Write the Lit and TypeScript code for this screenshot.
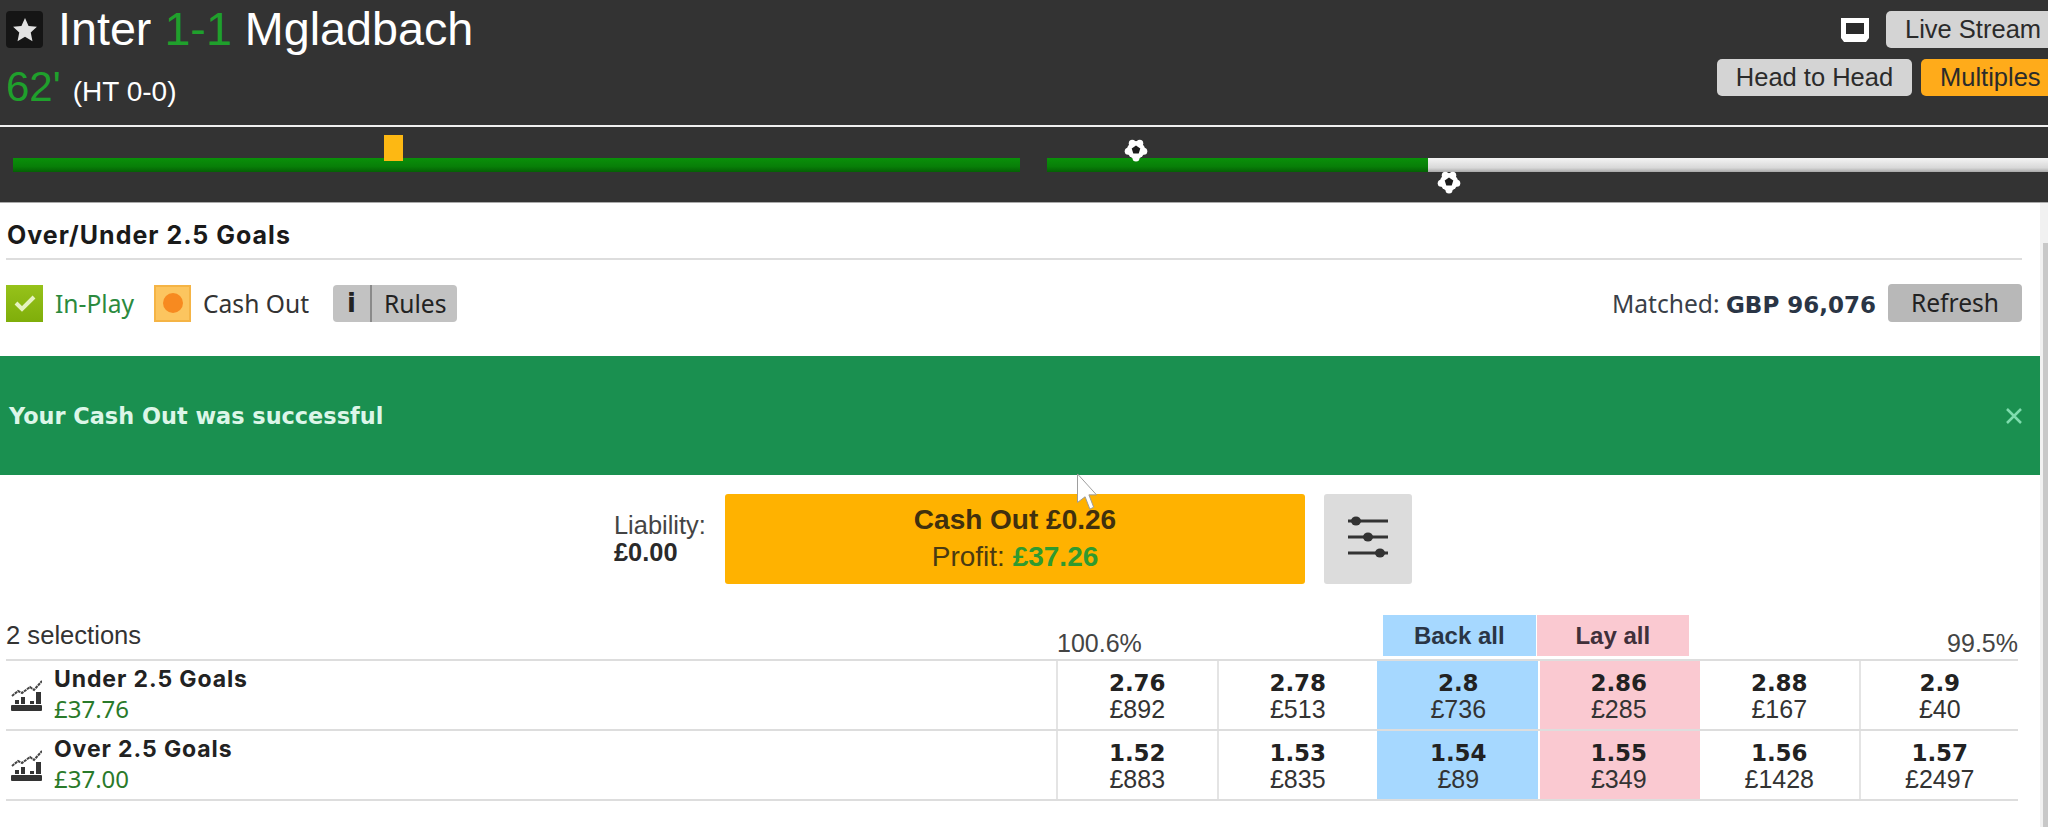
import { LitElement, html, css } from "lit";
import { customElement } from "lit/decorators.js";

const ball = html`<svg class="ball" viewBox="0 0 24 24"><g fill="#fff"><circle cx="12" cy="12" r="9"/><circle cx="8.250" cy="5.200" r="3.500"/><circle cx="15.750" cy="5.200" r="3.500"/><circle cx="19.800" cy="13.300" r="3.500"/><circle cx="12" cy="20" r="3.500"/><circle cx="4.200" cy="13.300" r="3.500"/></g><path d="M12 7.500l4.300 3.100-1.600 5H9.300l-1.600-5z" fill="#1c1c1c"/></svg>`;
const chart = html`<svg class="chart" viewBox="0 0 32 32"><path d="M2 17l6-5 4 2 8-6 4 3 8-9" fill="none" stroke="#444" stroke-width="2" stroke-dasharray="3 .7"/><path d="M5 21h4v4H5zM11 18h4v7h-4zM20 22h4v3h-4zM26 13h5v12h-5z" fill="#333"/><rect x="1" y="26" width="31" height="6" rx="1" fill="#333"/></svg>`;

const rows = [
  { name: "Under 2.5 Goals", pl: "£37.76", cells: [["2.76","£892"],["2.78","£513"],["2.8","£736"],["2.86","£285"],["2.88","£167"],["2.9","£40"]] },
  { name: "Over 2.5 Goals", pl: "£37.00", cells: [["1.52","£883"],["1.53","£835"],["1.54","£89"],["1.55","£349"],["1.56","£1428"],["1.57","£2497"]] },
];

@customElement("app-root")
export class AppRoot extends LitElement {
  static styles = css`
    :host { display: block; width: 2048px; height: 827px; overflow: hidden; background: #fff; color: #333; font-family: "Liberation Sans", Arial, sans-serif; }
    .head { height: 125px; box-sizing: border-box; background: #333; display: flex; justify-content: space-between; color: #fff; }
    .left { padding-left: 6px; }
    .titleRow { display: flex; align-items: center; gap: 15px; height: 37px; margin-top: 11px; }
    .star { width: 37px; height: 37px; border-radius: 4px; background: #151515; display: flex; align-items: center; justify-content: center; }
    .star svg { width: 26px; height: 26px; }
    .title { font-size: 46.700px; line-height: 37px; white-space: pre; }
    .green { color: #1fa02c; }
    .timeRow { display: flex; align-items: baseline; gap: 12px; margin-top: 20px; height: 38px; line-height: 38px; }
    .min { font-size: 42px; color: #1fa02c; }
    .ht { font-size: 28px; }
    .right { display: flex; flex-direction: column; align-items: flex-end; gap: 11px; padding-top: 11px; }
    .btnRow { display: flex; align-items: center; gap: 9px; }
    .tv { width: 30px; height: 24px; margin-right: 7px; }
    .btn { height: 37px; line-height: 37px; border-radius: 5px; background: #d4d4d4; color: #2b2b2b; font-size: 25.500px; text-align: center; box-sizing: border-box; }
    .live { width: 162px; border-radius: 5px 0 0 5px; padding-left: 19px; text-align: left; white-space: nowrap; }
    .h2h { width: 195px; }
    .multi { width: 127px; background: #ffab1a; border-radius: 5px 0 0 5px; padding-left: 19px; text-align: left; }
    .timeline { height: 78px; box-sizing: border-box; background: #333; border-top: 2px solid #f0f0f0; border-bottom: 1px solid #aaa; display: flex; gap: 27px; padding: 31px 0 0 13px; }
    .bar { position: relative; height: 14px; background: linear-gradient(#0a900a, #087f08 60%, #056005); }
    .b1 { width: 1007px; }
    .b2 { flex: 1; display: flex; }
    .fill { width: 381px; height: 14px; background: linear-gradient(#0a900a, #087f08 60%, #056005); }
    .rest { flex: 1; height: 14px; background: linear-gradient(#f4f4f4, #d8d8d8 70%, #a8a8a8); }
    .booking { position: absolute; left: 371px; top: -23px; width: 19px; height: 26px; background: #fdb813; }
    .ball { position: absolute; width: 24px; height: 24px; }
    .ballA { left: 77px; top: -20px; }
    .ballB { left: 390px; top: 12px; }
    .body { display: flex; height: 624px; }
    .content { flex: 1; min-width: 0; }
    .scroll { width: 8px; background: #f1f1f1; position: relative; display: flex; flex-direction: column; justify-content: flex-end; align-items: flex-end; }
    .thumb { width: 5px; height: 584px; background: #c8c8c8; }
    .section { padding: 0 18px 0 6px; }
    .mTitle { height: 50px; line-height: 55px; padding-top: 5px; border-bottom: 2px solid #ddd; font-family: "Inter", sans-serif; font-weight: 700; font-size: 25px; letter-spacing: 1px; color: #1a1a1a; padding-left: 1px; }
    .info { display: flex; align-items: center; height: 96px; box-sizing: border-box; padding-bottom: 10px; font-family: "Noto Sans", sans-serif; font-size: 24.600px; }
    .badge { width: 37px; height: 37px; box-sizing: border-box; display: flex; align-items: center; justify-content: center; }
    .check { background: linear-gradient(#96c21a, #7fae0a); margin-right: 12px; }
    .check svg { width: 26px; height: 26px; }
    .inplay { color: #2b8a3e; margin-right: 20px; }
    .co { background: #fcc55f; border: 2px solid #f5b445; margin-right: 12px; }
    .dot { width: 20px; height: 20px; border-radius: 50%; background: #f78a20; }
    .cashlbl { margin-right: 24px; color: #333; }
    .rules { display: flex; width: 124px; height: 37px; border-radius: 4px; background: #c2c2c2; color: #222; line-height: 37px; }
    .rules b { width: 37px; text-align: center; border-right: 2px solid #8a8a8a; font-family: "DejaVu Sans", sans-serif; font-size: 26px; }
    .rules span { padding-left: 12px; }
    .spacer { flex: 1; }
    .matched { color: #3a4048; }
    .matched b { font-family: "DejaVu Sans", sans-serif; font-size: 23px; color: #2a3545; }
    .refresh { width: 134px; height: 38px; line-height: 38px; text-align: center; background: #b8b8b8; border-radius: 4px; margin-left: 12px; color: #222; }
    .banner { height: 119px; background: #1a9050; color: #dcf6e8; display: flex; align-items: center; justify-content: space-between; padding: 0 17px 0 9px; font-family: "DejaVu Sans", sans-serif; font-weight: 700; font-size: 22.400px; }
    .banner svg { width: 18px; height: 18px; }
    .cash { display: flex; align-items: stretch; height: 90px; margin-top: 19px; position: relative; padding-left: 614px; }
    .liab { width: 111px; font-size: 25.400px; line-height: 27px; padding-top: 18px; color: #444; }
    .liab b { color: #2a2a2a; font-weight: 700; display: block; }
    .cashBtn { width: 580px; background: #ffb200; border-radius: 3px; text-align: center; color: #4a3a12; font-size: 28px; }
    .cashBtn b { display: block; line-height: 28px; margin-top: 12px; color: #40300e; }
    .cashBtn div { line-height: 28px; margin-top: 9px; }
    .cashBtn i { font-style: normal; font-weight: 700; color: #2f9a2f; }
    .tune { width: 88px; margin-left: 19px; background: #dcdcdc; border-radius: 3px; display: flex; align-items: center; justify-content: center; }
    .tune svg { width: 42px; height: 44px; margin-bottom: 4px; }
    .cursor { position: absolute; left: 1075px; top: -21px; width: 24px; height: 38px; }
    .grid { margin-top: 31px; padding: 0 22px 0 6px; position: relative; }
    .tableHead { display: flex; align-items: flex-end; height: 41px; margin-bottom: 3px; }
    .sel { font-size: 25.600px; line-height: 28px; width: 1051px; align-self: flex-start; padding-top: 6px; box-sizing: border-box; color: #333; }
    .pct { font-size: 25px; line-height: 28px; color: #444; margin-bottom: -1px; }
    .ba { height: 41px; line-height: 41px; text-align: center; font-size: 24px; font-weight: 700; color: #2a3545; }
    .ba.back { width: 153px; background: #a6d8ff; margin-left: 241px; }
    .ba.lay { width: 152px; background: #fac9d1; margin-left: 1px; color: #40303a; }
    .pctR { margin-left: auto; }
    .row { display: grid; grid-template-columns: 1050px repeat(6, 160.500px); height: 70px; border-top: 2px solid #ddd; box-sizing: border-box; }
    .row:last-child { height: 72px; border-bottom: 2px solid #ddd; }
    .runner { display: flex; align-items: center; gap: 12px; padding-left: 4px; }
    .chart { width: 32px; height: 32px; }
    .rname { font-family: "Inter", sans-serif; font-weight: 700; font-size: 23px; letter-spacing: .9px; line-height: 30px; color: #222; margin-top: -2px; }
    .rpl { font-family: "Noto Sans", sans-serif; font-size: 24px; line-height: 30px; color: #2a7a2a; }
    .cell { border-left: 2px solid #e4e4e4; text-align: center; font-size: 25px; color: #333; padding-top: 9px; box-sizing: border-box; }
    .cell b { display: block; font-family: "DejaVu Sans", sans-serif; font-size: 23px; line-height: 27px; color: #222; }
    .cell span { display: block; line-height: 25px; }
    .bk { background: #a6d8ff; border-left-color: #a6d8ff; }
    .ly { background: #fac9d1; border-left: 2px solid #fff; }
    .ly + .cell { border-left-color: #fac9d1; }
  `;

  render() {
    return html`
      <div class="head">
        <div class="left">
          <div class="titleRow">
            <div class="star"><svg viewBox="0 0 24 24"><path d="M12 1l3.300 7.300 7.700.8-5.700 5.300 1.600 7.900L12 18.300 5.100 22.300l1.600-7.900L1 9.100l7.700-.8z" fill="#e2e2e2"/></svg></div>
            <div class="title">Inter <span class="green">1-1</span> Mgladbach</div>
          </div>
          <div class="timeRow"><span class="min">62'</span><span class="ht">(HT 0-0)</span></div>
        </div>
        <div class="right">
          <div class="btnRow">
            <svg class="tv" viewBox="0 0 30 24"><path d="M1 0h28v20l-3 4H4l-3-4z" fill="#fff"/><rect x="6" y="5" width="18" height="11" fill="#2a2a2a"/></svg>
            <div class="btn live">Live Stream</div>
          </div>
          <div class="btnRow">
            <div class="btn h2h">Head to Head</div>
            <div class="btn multi">Multiples</div>
          </div>
        </div>
      </div>
      <div class="timeline">
        <div class="bar b1"><div class="booking"></div></div>
        <div class="bar b2"><div class="fill"></div><div class="rest"></div><span class="ballA ball">${ball}</span><span class="ballB ball">${ball}</span></div>
      </div>
      <div class="body">
        <div class="content">
          <div class="section">
            <div class="mTitle">Over/Under 2.5 Goals</div>
            <div class="info">
              <div class="badge check"><svg viewBox="0 0 26 26"><path d="M4 13l6 6L22 7" fill="none" stroke="#e6f2c0" stroke-width="4"/></svg></div>
              <span class="inplay">In-Play</span>
              <div class="badge co"><div class="dot"></div></div>
              <span class="cashlbl">Cash Out</span>
              <div class="rules"><b>i</b><span>Rules</span></div>
              <div class="spacer"></div>
              <span class="matched">Matched: <b>GBP 96,076</b></span>
              <div class="refresh">Refresh</div>
            </div>
          </div>
          <div class="banner"><span>Your Cash Out was successful</span><svg viewBox="0 0 18 18"><path d="M2 2l14 14M16 2L2 16" stroke="#7fdcae" stroke-width="2.500"/></svg></div>
          <div class="cash">
            <div class="liab">Liability:<b>£0.00</b></div>
            <div class="cashBtn"><b>Cash Out £0.26</b><div>Profit: <i>£37.26</i></div></div>
            <div class="tune"><svg viewBox="0 0 42 44"><g stroke="#333" stroke-width="3"><path d="M1 6h40M1 22h40M1 38h40"/></g><ellipse cx="9" cy="6" rx="5" ry="4.500" fill="#333"/><ellipse cx="21" cy="22" rx="5" ry="4.500" fill="#333"/><ellipse cx="33" cy="38" rx="5" ry="4.500" fill="#333"/></svg></div>
            <svg class="cursor" viewBox="0 0 24 40"><path d="M2 1l20 22h-8l5 13-4 2-5-13-8 6z" fill="#fff" stroke="#999" stroke-width="1"/></svg>
          </div>
          <div class="grid">
            <div class="tableHead">
              <div class="sel">2 selections</div>
              <div class="pct">100.6%</div>
              <div class="ba back">Back all</div>
              <div class="ba lay">Lay all</div>
              <div class="pct pctR">99.5%</div>
            </div>
            ${rows.map(r => html`
              <div class="row">
                <div class="runner">${chart}<div><div class="rname">${r.name}</div><div class="rpl">${r.pl}</div></div></div>
                ${r.cells.map((c, i) => html`<div class="cell ${i === 2 ? "bk" : i === 3 ? "ly" : ""}"><b>${c[0]}</b><span>${c[1]}</span></div>`)}
              </div>`)}
          </div>
        </div>
        <div class="scroll"><div class="thumb"></div></div>
      </div>
    `;
  }
}
